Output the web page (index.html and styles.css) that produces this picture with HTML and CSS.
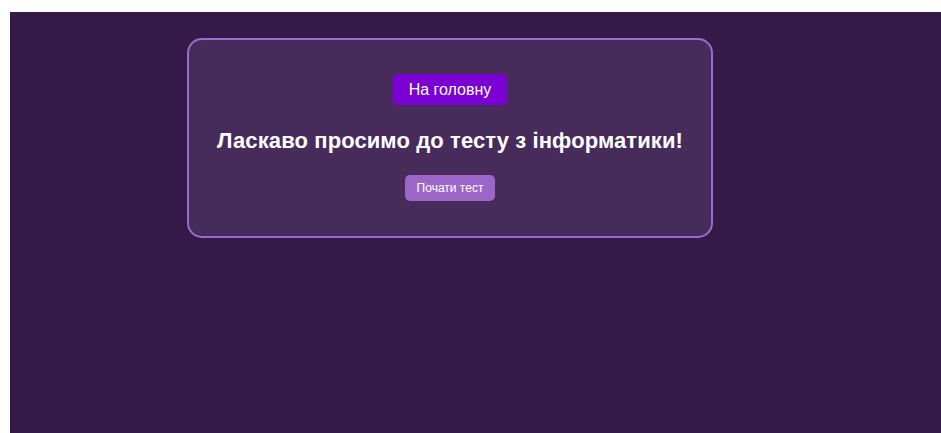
FILE: index.html
```html
<!DOCTYPE html>
<html lang="uk">
<head>
<meta charset="utf-8">
<title>Тест з інформатики</title>
<link rel="stylesheet" href="styles.css">
</head>
<body>
<main class="page">
  <section class="card">
    <a class="home-btn" href="#">На головну</a>
    <h1 class="title">Ласкаво просимо до тесту з інформатики!</h1>
    <button class="start-btn" type="button">Почати тест</button>
  </section>
</main>
</body>
</html>
```

FILE: styles.css
```css
html, body {
  margin: 0;
  overflow: hidden;
}

body {
  background: #ffffff;
  padding: 12px 0 0 10px;
  font-family: "Liberation Sans", Arial, sans-serif;
}

.page {
  background: #351a48;
  height: calc(100vh - 12px);
  padding-top: 26px;
  box-sizing: border-box;
}

.card {
  margin-left: 177px;
  width: 526px;
  box-sizing: border-box;
  background: #472b5b;
  border: 2px solid #9b6bd0;
  border-radius: 15px;
  padding: 34px 20px 35px;
  display: flex;
  flex-direction: column;
  align-items: center;
}

.home-btn {
  display: inline-block;
  background: #7a00d4;
  color: #ffffff;
  text-decoration: none;
  font-size: 16px;
  line-height: 19px;
  padding: 6px 16px;
  border-radius: 4px;
}

.title {
  margin: 23px 0 0;
  color: #ffffff;
  font-size: 22px;
  font-weight: bold;
  line-height: 25px;
  letter-spacing: 0.1px;
}

.start-btn {
  margin-top: 22px;
  background: #9c66c8;
  color: #ffffff;
  border: none;
  font-family: inherit;
  font-size: 12px;
  line-height: 14px;
  padding: 6px 12px;
  border-radius: 5px;
}
```
